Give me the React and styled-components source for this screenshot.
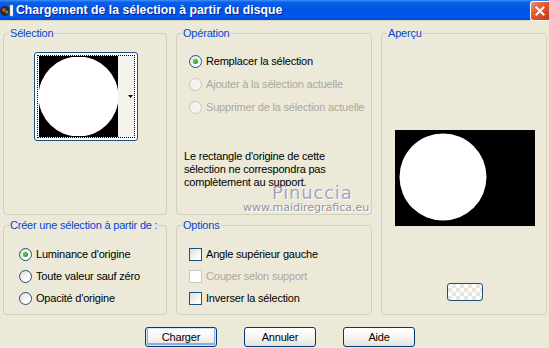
import React, { useState } from 'react';
import styled, { createGlobalStyle, css } from 'styled-components';

const GlobalStyle = createGlobalStyle`
  html, body {
    margin: 0;
    padding: 0;
    background: #ece9d8;
  }
  body {
    font-family: "Liberation Sans", Arial, sans-serif;
    font-size: 11px;
    letter-spacing: -0.2px;
    color: #000;
  }
`;

const Window = styled.div`
  width: 549px;
  height: 348px;
  background: #ece9d8;
  overflow: hidden;
  display: flex;
  flex-direction: column;
`;

const TitleBar = styled.div`
  height: 20px;
  display: flex;
  align-items: center;
  background: linear-gradient(to bottom, #3d8ff7 0%, #0a5fe9 12%, #0054e3 50%, #0058ee 85%, #0047d2 100%);
  border-bottom: 1px solid #d6d2c2;
`;

const TitleIcon = styled.div`
  width: 14px;
  height: 16px;
  display: flex;
  align-items: center;
`;

const TitleText = styled.div`
  flex: 1;
  margin-left: 2px;
  color: #fff;
  font-weight: bold;
  font-size: 12.2px;
  letter-spacing: 0.05px;
  text-shadow: 1px 1px 0 #0a1e8a;
  white-space: nowrap;
`;

const CloseButton = styled.div`
  width: 18px;
  height: 18px;
  margin-top: 1px;
  border: 1px solid #fff;
  border-right: none;
  border-radius: 3px 0 0 3px;
  background: linear-gradient(135deg, #f08d70 0%, #e2572e 45%, #c8351a 100%);
  display: flex;
  align-items: center;
  justify-content: center;
`;

const Body = styled.div`
  display: grid;
  grid-template-columns: 164px 196px 166px;
  grid-template-rows: 188px 96px;
  column-gap: 9px;
  row-gap: 4px;
  padding: 6px 0 0 3px;
`;

const Group = styled.fieldset`
  margin: 0;
  padding: 0;
  border: 1px solid #d0d0bf;
  border-radius: 4px;
  min-width: 0;
  display: flex;
  flex-direction: column;
  position: relative;
  ${p => p.$span && css`grid-row: 1 / 3; grid-column: 3;`}
`;

const Legend = styled.legend`
  margin-left: 5px;
  padding: 0 1px;
  color: #0046d5;
  font-size: 11px;
  line-height: 13px;
`;

const ThumbWrap = styled.div`
  display: flex;
  justify-content: center;
  padding-top: 12px;
  padding-left: 1px;
`;

const Thumb = styled.div`
  width: 98px;
  height: 83px;
  border: 1px solid #1c5180;
  border-radius: 3px;
  background: #fff;
  padding: 2px;
  box-sizing: content-box;
`;

const ThumbInner = styled.div`
  height: 81px;
  border: 1px dotted #000;
  display: flex;
`;

const ThumbImage = styled.div`
  width: 79px;
  display: flex;
  align-items: center;
  background: #000;
  margin-left: 1px;
`;

const ThumbStrip = styled.div`
  flex: 1;
  background: #f4f3ee;
  display: flex;
  align-items: center;
  justify-content: flex-end;
  padding-right: 1px;
`;

const RadioList = styled.div`
  display: flex;
  flex-direction: column;
  gap: ${p => p.$gap}px;
  padding: ${p => p.$top}px 0 0 ${p => p.$left}px;
`;

const OptionRow = styled.label`
  display: flex;
  align-items: center;
  gap: 4px;
  height: 14px;
  color: ${p => (p.$disabled ? '#aca899' : '#000')};
  white-space: nowrap;
`;

const RadioDot = styled.span`
  width: 11px;
  height: 11px;
  border-radius: 50%;
  border: 1px solid ${p => (p.$disabled ? '#cac8bb' : '#1c5180')};
  background: ${p => (p.$disabled ? '#f3f2ec' : 'linear-gradient(135deg, #dcdcd5 0%, #fff 70%)')};
  display: flex;
  align-items: center;
  justify-content: center;
  flex: none;
  &::after {
    content: '';
    display: ${p => (p.$checked ? 'block' : 'none')};
    width: 5px;
    height: 5px;
    border-radius: 50%;
    background: radial-gradient(circle at 40% 40%, #5ed25e 0%, #21a121 70%);
  }
`;

const CheckBox = styled.span`
  width: 11px;
  height: 11px;
  border: 1px solid ${p => (p.$disabled ? '#cac8bb' : '#1c5180')};
  background: ${p => (p.$disabled ? '#fff' : 'linear-gradient(135deg, #dcdcd5 0%, #fff 80%)')};
  flex: none;
`;

const Note = styled.p`
  margin: 0;
  padding: 36px 0 0 7px;
  line-height: 13px;
`;

const Watermark = styled.div`
  position: absolute;
  left: 66px;
  top: 144px;
  display: flex;
  flex-direction: column;
  align-items: flex-start;
  pointer-events: none;
`;

const WmName = styled.span`
  font-family: "DejaVu Sans", sans-serif;
  font-size: 18px;
  line-height: 17px;
  letter-spacing: 0.8px;
  color: rgba(150, 150, 178, 0.85);
  text-shadow: 1px 1px 0 #fff;
  margin-left: 29px;
`;

const WmSite = styled.span`
  font-family: "DejaVu Sans", sans-serif;
  font-size: 11px;
  line-height: 13px;
  letter-spacing: 0;
  color: rgba(125, 125, 140, 0.85);
  text-shadow: 1px 1px 0 #fff;
`;

const PreviewArea = styled.div`
  flex: 1;
  display: flex;
  flex-direction: column;
  align-items: center;
  padding-left: 2px;
`;

const PreviewImage = styled.div`
  width: 140px;
  height: 96px;
  background: #000;
  margin-top: 90px;
`;

const SmallButton = styled.div`
  width: 34px;
  height: 16px;
  margin-top: 57px;
  border: 1px solid #1c5180;
  border-radius: 3px;
  background:
    linear-gradient(45deg, #e6e6e0 25%, transparent 25%, transparent 75%, #e6e6e0 75%),
    linear-gradient(45deg, #e6e6e0 25%, transparent 25%, transparent 75%, #e6e6e0 75%) 4px 4px,
    #fbfbf8;
  background-size: 8px 8px;
`;

const ButtonRow = styled.div`
  display: flex;
  gap: 27px;
  padding: 12px 0 0 145px;
`;

const Button = styled.button`
  width: 72px;
  height: 20px;
  padding: 0;
  font-family: "Liberation Sans", Arial, sans-serif;
  font-size: 11px;
  letter-spacing: -0.2px;
  color: #000;
  border: 1px solid #003c74;
  border-radius: 3px;
  background: linear-gradient(to bottom, #ffffff 0%, #f4f3ee 60%, #e3e1d8 100%);
  ${p => p.$default && css`
    box-shadow: inset 0 0 0 1px #cee7ff, inset 0 -1px 0 2px #89adeb;
  `}
`;

const Radio = ({ label, checked, disabled }) => (
  <OptionRow $disabled={disabled}>
    <RadioDot $checked={checked} $disabled={disabled} />
    {label}
  </OptionRow>
);

const Check = ({ label, disabled }) => (
  <OptionRow $disabled={disabled}>
    <CheckBox $disabled={disabled} />
    {label}
  </OptionRow>
);

export default function App() {
  const [source] = useState('lum');

  return (
    <Window>
      <GlobalStyle />
      <TitleBar>
        <TitleIcon>
          <svg width="14" height="16" viewBox="0 0 14 16">
            <circle cx="5" cy="9" r="5" fill="#2a2a2a" />
            <circle cx="4" cy="8" r="2" fill="#c43" />
            <circle cx="7" cy="10" r="1.5" fill="#3a6" />
            <rect x="10" y="3" width="3" height="11" fill="#fff" stroke="#999" strokeWidth="0.5" />
          </svg>
        </TitleIcon>
        <TitleText>Chargement de la sélection à partir du disque</TitleText>
        <CloseButton>
          <svg width="10" height="10" viewBox="0 0 10 10">
            <path d="M1.5 1.5 L8.5 8.5 M8.5 1.5 L1.5 8.5" stroke="#fff" strokeWidth="2" strokeLinecap="square" />
          </svg>
        </CloseButton>
      </TitleBar>

      <Body>
        <Group>
          <Legend>Sélection</Legend>
          <ThumbWrap>
            <Thumb>
              <ThumbInner>
                <ThumbImage>
                  <svg width="79" height="79" viewBox="0 0 79 79">
                    <circle cx="39.5" cy="39.5" r="40" fill="#fff" />
                  </svg>
                </ThumbImage>
                <ThumbStrip>
                  <svg width="5" height="3" viewBox="0 0 5 3">
                    <path d="M0 0 H5 L2.5 3 Z" fill="#000" />
                  </svg>
                </ThumbStrip>
              </ThumbInner>
            </Thumb>
          </ThumbWrap>
        </Group>

        <Group>
          <Legend>Opération</Legend>
          <RadioList $top={14} $left={12} $gap={9}>
            <Radio label="Remplacer la sélection" checked />
            <Radio label="Ajouter à la sélection actuelle" disabled />
            <Radio label="Supprimer de la sélection actuelle" disabled />
          </RadioList>
          <Note>
            Le rectangle d'origine de cette
            <br />
            sélection ne correspondra pas
            <br />
            complètement au support.
          </Note>
          <Watermark>
            <WmName>Pinuccia</WmName>
            <WmSite>www.maidiregrafica.eu</WmSite>
          </Watermark>
        </Group>

        <Group $span>
          <Legend>Aperçu</Legend>
          <PreviewArea>
            <PreviewImage>
              <svg width="140" height="96" viewBox="0 0 140 96">
                <circle cx="48" cy="47" r="43.5" fill="#fff" />
              </svg>
            </PreviewImage>
            <SmallButton />
          </PreviewArea>
        </Group>

        <Group>
          <Legend>Créer une sélection à partir de :</Legend>
          <RadioList $top={15} $left={15} $gap={8}>
            <Radio label="Luminance d'origine" checked={source === 'lum'} />
            <Radio label="Toute valeur sauf zéro" checked={source === 'nz'} />
            <Radio label="Opacité d'origine" checked={source === 'op'} />
          </RadioList>
        </Group>

        <Group>
          <Legend>Options</Legend>
          <RadioList $top={15} $left={12} $gap={8}>
            <Check label="Angle supérieur gauche" />
            <Check label="Couper selon support" disabled />
            <Check label="Inverser la sélection" />
          </RadioList>
        </Group>
      </Body>

      <ButtonRow>
        <Button $default>Charger</Button>
        <Button>Annuler</Button>
        <Button>Aide</Button>
      </ButtonRow>
    </Window>
  );
}
